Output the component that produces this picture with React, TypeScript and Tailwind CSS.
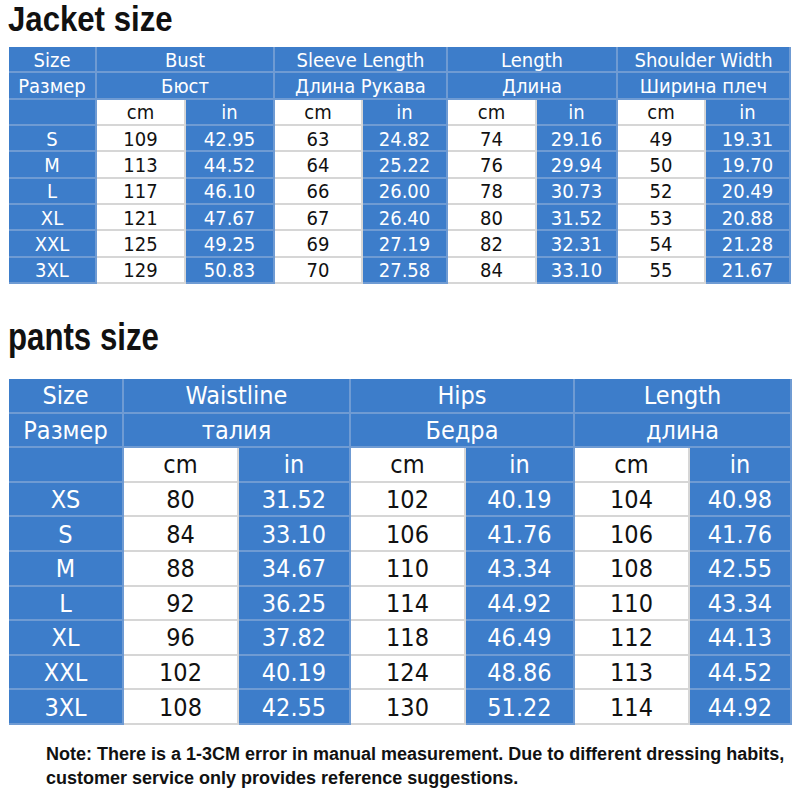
import React from "react";

const BLUE = "blue";
const WHITE = "white";

type CellProps = { text?: string; kind: string; span?: number; size: "j" | "p" };

function Cell({ text, kind, span, size }: CellProps) {
  const base =
    size === "j"
      ? "flex items-center justify-center pt-[1px] text-[20px] leading-none border-r-2 border-b-2 font-['DejaVu_Sans_Condensed','DejaVu_Sans',sans-serif] font-stretch-condensed"
      : "flex items-center justify-center pt-[1px] text-[25px] leading-none border-r-2 border-b-2 font-['DejaVu_Sans_Condensed','DejaVu_Sans',sans-serif] font-stretch-condensed";
  const color =
    kind === BLUE
      ? "bg-[#3d7dca] text-white border-[#6f9bd3]"
      : "bg-white text-[#111] border-[#d6d6d6]";
  const spanCls = span === 2 ? "col-span-2" : "";
  return <div className={`${base} ${color} ${spanCls}`}>{text}</div>;
}

const jacketHead1 = ["Bust", "Sleeve Length", "Length", "Shoulder Width"];
const jacketHead2 = ["Бюст", "Длина Рукава", "Длина", "Ширина плеч"];
const jacketRows = [
  ["S", "109", "42.95", "63", "24.82", "74", "29.16", "49", "19.31"],
  ["M", "113", "44.52", "64", "25.22", "76", "29.94", "50", "19.70"],
  ["L", "117", "46.10", "66", "26.00", "78", "30.73", "52", "20.49"],
  ["XL", "121", "47.67", "67", "26.40", "80", "31.52", "53", "20.88"],
  ["XXL", "125", "49.25", "69", "27.19", "82", "32.31", "54", "21.28"],
  ["3XL", "129", "50.83", "70", "27.58", "84", "33.10", "55", "21.67"],
];

const pantsHead1 = ["Waistline", "Hips", "Length"];
const pantsHead2 = ["талия", "Бедра", "длина"];
const pantsRows = [
  ["XS", "80", "31.52", "102", "40.19", "104", "40.98"],
  ["S", "84", "33.10", "106", "41.76", "106", "41.76"],
  ["M", "88", "34.67", "110", "43.34", "108", "42.55"],
  ["L", "92", "36.25", "114", "44.92", "110", "43.34"],
  ["XL", "96", "37.82", "118", "46.49", "112", "44.13"],
  ["XXL", "102", "40.19", "124", "48.86", "113", "44.52"],
  ["3XL", "108", "42.55", "130", "51.22", "114", "44.92"],
];

function rowCells(row: string[], size: "j" | "p", key: string) {
  return row.map((v, i) => (
    <Cell
      key={`${key}-${i}`}
      text={v}
      size={size}
      kind={i === 0 ? BLUE : i % 2 === 1 ? WHITE : BLUE}
    />
  ));
}

function unitRow(n: number, size: "j" | "p") {
  const cells = [<Cell key="u0" kind={BLUE} size={size} />];
  for (let i = 0; i < n; i++) {
    cells.push(<Cell key={`uc${i}`} text="cm" kind={WHITE} size={size} />);
    cells.push(<Cell key={`ui${i}`} text="in" kind={BLUE} size={size} />);
  }
  return cells;
}

export default function App() {
  return (
    <div className="w-[800px] h-[800px] bg-white flex flex-col overflow-hidden">
      <div className="pl-[8px] pt-[1px] h-[36px]">
        <span className="inline-block origin-left scale-x-[0.89] text-[35px] leading-[35px] font-bold text-[#111] font-['Liberation_Sans',sans-serif] whitespace-nowrap">
          Jacket size
        </span>
      </div>
      <div className="mt-[11px] ml-[9px] w-[782px] grid grid-cols-[88px_89px_89px_88px_85px_89px_81px_88px_85px] grid-rows-[repeat(9,26.33px)]">
        <Cell text="Size" kind={BLUE} size="j" />
        {jacketHead1.map((h) => (
          <Cell key={h} text={h} kind={BLUE} span={2} size="j" />
        ))}
        <Cell text="Размер" kind={BLUE} size="j" />
        {jacketHead2.map((h) => (
          <Cell key={h} text={h} kind={BLUE} span={2} size="j" />
        ))}
        {unitRow(4, "j")}
        {jacketRows.map((r, i) => rowCells(r, "j", `j${i}`))}
      </div>

      <div className="mt-[33px] pl-[8px] h-[40px]">
        <span className="inline-block origin-left scale-x-[0.8] text-[39px] leading-[40px] font-bold text-[#111] font-['Liberation_Sans',sans-serif] whitespace-nowrap">
          pants size
        </span>
      </div>
      <div className="mt-[22px] ml-[9px] w-[783px] grid grid-cols-[115px_115px_112px_115px_109px_115px_102px] grid-rows-[repeat(10,34.6px)]">
        <Cell text="Size" kind={BLUE} size="p" />
        {pantsHead1.map((h) => (
          <Cell key={h} text={h} kind={BLUE} span={2} size="p" />
        ))}
        <Cell text="Размер" kind={BLUE} size="p" />
        {pantsHead2.map((h) => (
          <Cell key={h} text={h} kind={BLUE} span={2} size="p" />
        ))}
        {unitRow(3, "p")}
        {pantsRows.map((r, i) => rowCells(r, "p", `p${i}`))}
      </div>

      <div className="mt-[17px] pl-[46px] pr-[8px] text-[18px] leading-[24px] font-bold text-[#111] font-['Liberation_Sans',sans-serif]">
        <p className="whitespace-nowrap">
          Note: There is a 1-3CM error in manual measurement. Due to different dressing habits,
        </p>
        <p className="whitespace-nowrap">customer service only provides reference suggestions.</p>
      </div>
    </div>
  );
}
